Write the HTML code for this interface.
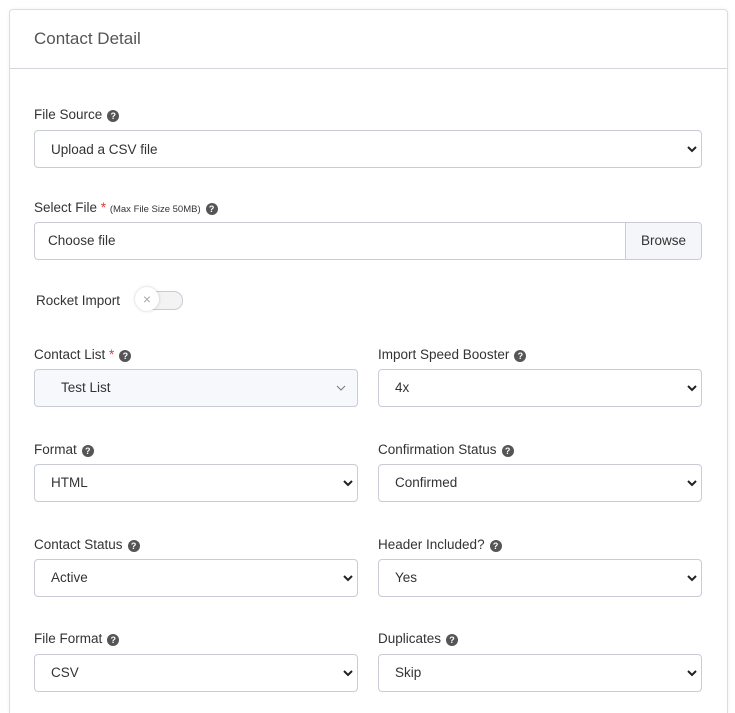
<!DOCTYPE html><html><head><style>
html,body{margin:0;width:735px;height:713px;overflow:hidden;background:#fff;font-family:"Liberation Sans",sans-serif;color:#333}
#w{position:relative;width:735px;height:713px;overflow:hidden}
.card{position:absolute;left:9px;top:9px;width:717px;height:704px;border:1px solid #dcdde2;border-bottom:none;border-radius:4px 4px 0 0;box-sizing:border-box;width:719px;box-shadow:0 0 3px rgba(0,0,0,.06)}
.hd{position:absolute;left:9px;top:68px;width:718px;height:1px;background:#d3d5df}
.t{position:absolute;left:34px;top:29px;font-size:17px;color:#555}
.l{position:absolute;font-size:13.5px;color:#333;white-space:nowrap}
.q{display:inline-block;width:12px;height:12px;border-radius:50%;background:#555;color:#fff;font-size:9px;font-weight:bold;text-align:center;line-height:12px;vertical-align:0px;margin-left:5px}
.r{color:#e53935}
.b{position:absolute;height:37px;border:1px solid #c9ccd6;border-radius:4px;box-sizing:border-box;font-size:13.5px;color:#333;line-height:36px;padding-left:16px}
.b svg{position:absolute;right:4px;top:14px}
</style></head><body><div id="w">
<div class="card"></div><div class="hd"></div>
<div class="t">Contact Detail</div>
<div class="l" style="left:34px;top:107px">File Source<span class="q">?</span></div>
<div class="b" style="left:34px;top:130px;width:668px;height:38px;line-height:37px">Upload a CSV file<svg width="10" height="8"><path d="M1 2l4 4 4-4" stroke="#222" stroke-width="2" fill="none"/></svg></div>
<div class="l" style="left:34px;top:200px">Select File <span class="r">*</span> <span style="font-size:9.5px">(Max File Size 50MB)</span><span class="q">?</span></div>
<div class="b" style="left:34px;top:222px;width:668px;height:38px;padding-left:13px">Choose file<div style="position:absolute;right:0;top:0;width:75px;height:36px;background:#f4f6f9;border-left:1px solid #c9ccd6;text-align:center;border-radius:0 4px 4px 0">Browse</div></div>
<div class="l" style="left:36px;top:293px">Rocket Import</div>
<div style="position:absolute;left:139px;top:291px;width:42px;height:17px;border:1px solid #c9ccd6;border-radius:9px;background:#f3f3f3"></div>
<div style="position:absolute;left:135px;top:287px;width:24px;height:24px;border-radius:50%;background:#fff;box-shadow:0 0 3px rgba(0,0,0,.2);text-align:center;line-height:24px;color:#aaa;font-size:14px">×</div>
<div class="l" style="left:34px;top:347px">Contact List <span class="r">*</span><span class="q">?</span></div>
<div class="b" style="left:34px;top:369px;width:324px;height:38px;background:#f6f8fc;padding-left:26px">Test List<svg width="10" height="8" style="right:11px"><path d="M1 2l4 4 4-4" stroke="#777" stroke-width="1" fill="none"/></svg></div>
<div class="l" style="left:378px;top:347px">Import Speed Booster<span class="q">?</span></div>
<div class="b" style="left:378px;top:369px;width:324px;height:38px">4x<svg width="10" height="8"><path d="M1 2l4 4 4-4" stroke="#222" stroke-width="2" fill="none"/></svg></div>
<div class="l" style="left:34px;top:442px">Format<span class="q">?</span></div>
<div class="b" style="left:34px;top:464px;width:324px;height:38px">HTML<svg width="10" height="8"><path d="M1 2l4 4 4-4" stroke="#222" stroke-width="2" fill="none"/></svg></div>
<div class="l" style="left:378px;top:442px">Confirmation Status<span class="q">?</span></div>
<div class="b" style="left:378px;top:464px;width:324px;height:38px">Confirmed<svg width="10" height="8"><path d="M1 2l4 4 4-4" stroke="#222" stroke-width="2" fill="none"/></svg></div>
<div class="l" style="left:34px;top:537px">Contact Status<span class="q">?</span></div>
<div class="b" style="left:34px;top:559px;width:324px;height:38px">Active<svg width="10" height="8"><path d="M1 2l4 4 4-4" stroke="#222" stroke-width="2" fill="none"/></svg></div>
<div class="l" style="left:378px;top:537px">Header Included?<span class="q">?</span></div>
<div class="b" style="left:378px;top:559px;width:324px;height:38px">Yes<svg width="10" height="8"><path d="M1 2l4 4 4-4" stroke="#222" stroke-width="2" fill="none"/></svg></div>
<div class="l" style="left:34px;top:631px">File Format<span class="q">?</span></div>
<div class="b" style="left:34px;top:654px;width:324px;height:38px">CSV<svg width="10" height="8"><path d="M1 2l4 4 4-4" stroke="#222" stroke-width="2" fill="none"/></svg></div>
<div class="l" style="left:378px;top:631px">Duplicates<span class="q">?</span></div>
<div class="b" style="left:378px;top:654px;width:324px;height:38px">Skip<svg width="10" height="8"><path d="M1 2l4 4 4-4" stroke="#222" stroke-width="2" fill="none"/></svg></div>
</div></body></html>
